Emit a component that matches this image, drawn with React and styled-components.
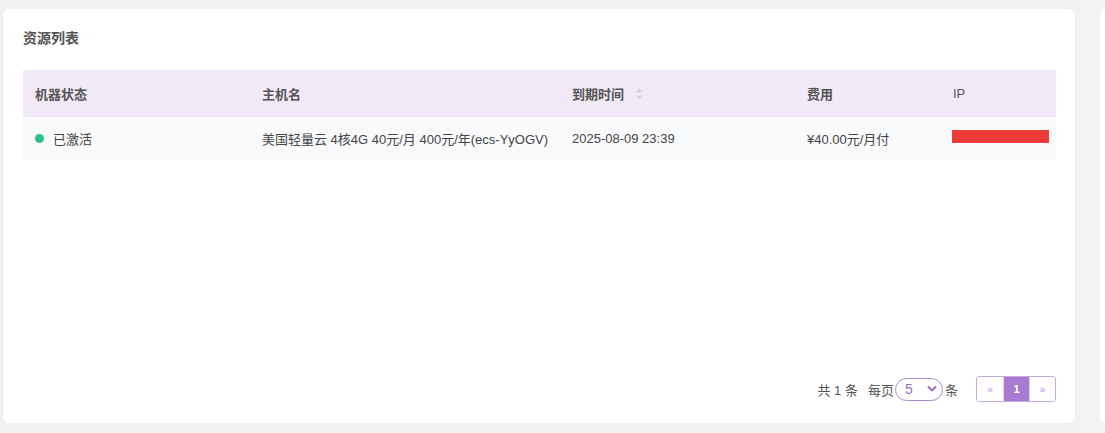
import React from 'react'
import styled, { createGlobalStyle } from 'styled-components'

const GlobalStyle = createGlobalStyle`
  html, body {
    margin: 0;
    padding: 0;
    background: #f2f3f5;
    font-family: "Liberation Sans", "Noto Sans CJK SC", Arial, sans-serif;
  }
`;

const columns = [
  { key: 'status', label: '机器状态', width: 227 },
  { key: 'host', label: '主机名', width: 310 },
  { key: 'expire', label: '到期时间', width: 235, sortable: true },
  { key: 'fee', label: '费用', width: 146 },
  { key: 'ip', label: 'IP', plain: true },
]

function App() {
  return (
    <>
      <GlobalStyle />
      <Page>
        <Card>
          <Title>资源列表</Title>
          <Table>
            <HeadRow>
              {columns.map(c => (
                <HeadCell key={c.key} $w={c.width} $plain={c.plain}>
                  {c.label}
                  {c.sortable && (
                    <SortIcon width="8" height="14" viewBox="0 0 8 14">
                      <path d="M4 1 L7.5 5.5 L0.5 5.5 Z" fill="#d6d6dc" />
                      <path d="M4 13 L7.5 8.5 L0.5 8.5 Z" fill="#d6d6dc" />
                    </SortIcon>
                  )}
                </HeadCell>
              ))}
            </HeadRow>
            <BodyRow>
              <Cell $w={227}>
                <Dot />
                已激活
              </Cell>
              <Cell $w={310}>美国轻量云 4核4G 40元/月 400元/年(ecs-YyOGV)</Cell>
              <Cell $w={235}>2025-08-09 23:39</Cell>
              <Cell $w={146}>¥40.00元/月付</Cell>
              <Cell $pl={11}>
                <Redacted />
              </Cell>
            </BodyRow>
          </Table>
          <Footer>
            <Total>共 1 条</Total>
            <PerPage>
              每页
              <SizeSelect>
                <span>5</span>
                <svg width="10" height="8" viewBox="0 0 10 8">
                  <path d="M1.5 2 L5 5.5 L8.5 2" stroke="#9a6fc4" strokeWidth="2" fill="none" strokeLinecap="round" strokeLinejoin="round" />
                </svg>
              </SizeSelect>
              条
            </PerPage>
            <Pager>
              <PageBtn>«</PageBtn>
              <PageBtn $active>1</PageBtn>
              <PageBtn>»</PageBtn>
            </Pager>
          </Footer>
        </Card>
        <SideCard />
      </Page>
    </>
  )
}

export default App

const Page = styled.div`
  display: flex;
  gap: 25px;
  padding: 9px 0 10px 3px;
  height: 433px;
  box-sizing: border-box;
  overflow: hidden;
`;

const Card = styled.div`
  width: 1072px;
  flex-shrink: 0;
  background: #fff;
  border-radius: 6px;
  box-shadow: 0 0 6px rgba(0, 0, 0, 0.04);
  padding: 19px 19px 21px 20px;
  box-sizing: border-box;
  display: flex;
  flex-direction: column;
`;

const SideCard = styled.div`
  flex: 1;
  background: #fff;
  border-radius: 6px 0 0 6px;
`;

const Title = styled.div`
  font-size: 14px;
  font-weight: bold;
  color: #555;
  line-height: 18px;
  font-family: "Noto Sans CJK SC", sans-serif;
`;

const Table = styled.div`
  margin-top: 24px;
  font-size: 13px;
`;

const HeadRow = styled.div`
  display: flex;
  height: 47px;
  align-items: center;
  background: #f1e9f7;
`;

const HeadCell = styled.div`
  ${p => (p.$w ? `width: ${p.$w}px;` : 'flex: 1;')}
  padding-left: 12px;
  box-sizing: border-box;
  color: #555;
  font-weight: ${p => (p.$plain ? 'normal' : 'bold')};
  display: flex;
  align-items: center;
`;

const SortIcon = styled.svg`
  margin-left: 11px;
`;

const BodyRow = styled.div`
  display: flex;
  height: 43px;
  align-items: center;
  background: #f9fafc;
`;

const Cell = styled.div`
  ${p => (p.$w ? `width: ${p.$w}px;` : 'flex: 1;')}
  padding-left: ${p => p.$pl || 12}px;
  box-sizing: border-box;
  color: #444;
  display: flex;
  align-items: center;
  white-space: nowrap;
`;

const Dot = styled.span`
  width: 9px;
  height: 9px;
  border-radius: 50%;
  background: #2ebf8b;
  margin-right: 9px;
`;

const Redacted = styled.span`
  display: block;
  width: 97px;
  height: 13px;
  margin-top: -5px;
  background: #f03a3a;
`;

const Footer = styled.div`
  margin-top: auto;
  display: flex;
  align-items: center;
  justify-content: flex-end;
  font-size: 13px;
  color: #555;
`;

const Total = styled.span`
  margin-right: 10px;
`;

const PerPage = styled.span`
  display: flex;
  align-items: center;
  margin-right: 18px;
`;

const SizeSelect = styled.span`
  display: inline-flex;
  align-items: center;
  justify-content: space-between;
  width: 48px;
  height: 23px;
  box-sizing: border-box;
  padding: 0 5px 0 9px;
  margin: 0 2px 0 1px;
  border: 1px solid #a98ac6;
  border-radius: 12px;
  color: #9a6fc4;
  font-size: 14px;
`;

const Pager = styled.div`
  display: flex;
  border: 1px solid #c4a9dc;
  border-radius: 3px;
  overflow: hidden;
  height: 26px;
  box-sizing: border-box;
`;

const PageBtn = styled.span`
  width: 26px;
  box-sizing: border-box;
  display: flex;
  align-items: center;
  justify-content: center;
  font-size: 11px;
  color: ${p => (p.$active ? '#fff' : '#b99ad4')};
  background: ${p => (p.$active ? '#a97ad2' : '#fff')};
  font-weight: ${p => (p.$active ? 'bold' : 'normal')};
  & + & {
    border-left: 1px solid #e4d6ef;
  }
`;
